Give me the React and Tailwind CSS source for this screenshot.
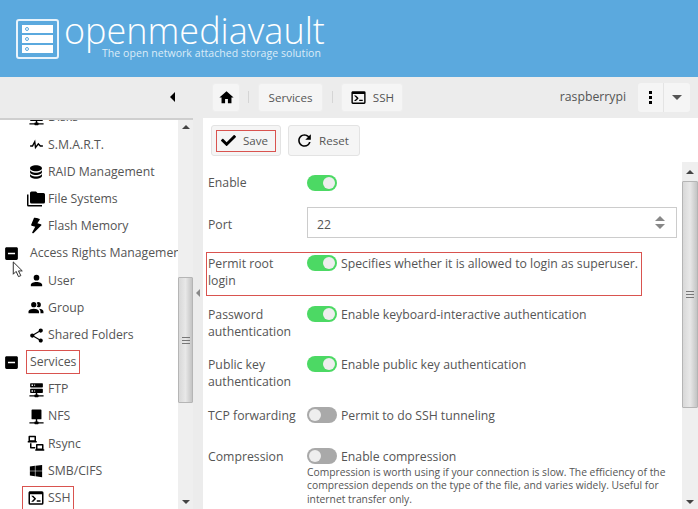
import React from 'react';
import { FaBolt, FaCheck, FaWindows } from 'react-icons/fa';
import { MdRefresh } from 'react-icons/md';

const mdi = {
  home: 'M10,20V14H14V20H19V12H22L12,3L2,12H5V20H10Z',
  console: 'M20,19V7H4V19H20M20,3A2,2 0 0,1 22,5V19A2,2 0 0,1 20,21H4A2,2 0 0,1 2,19V5C2,3.89 2.9,3 4,3H20M13,17V15H18V17H13M9.58,13L5.57,9H8.4L11.7,12.3C12.09,12.69 12.09,13.33 11.7,13.72L8.42,17H5.59L9.58,13Z',
  pulse: 'M3,13H5.79L10.1,4.79L11.28,13.75L14.5,9.66L17.83,13H21V15H17L14.67,12.67L9.92,18.73L8.94,11.31L7,15H3V13Z',
  database: 'M12,3C7.58,3 4,4.79 4,7C4,9.21 7.58,11 12,11C16.42,11 20,9.21 20,7C20,4.79 16.42,3 12,3M4,9V12C4,14.21 7.58,16 12,16C16.42,16 20,14.21 20,12V9C20,11.21 16.42,13 12,13C7.58,13 4,11.21 4,9M4,14V17C4,19.21 7.58,21 12,21C16.42,21 20,19.21 20,17V14C20,16.21 16.42,18 12,18C7.58,18 4,16.21 4,14Z',
  folders: 'M22,4H14L12,2H6A2,2 0 0,0 4,4V16A2,2 0 0,0 6,18H22A2,2 0 0,0 24,16V6A2,2 0 0,0 22,4M2,6H0V20A2,2 0 0,0 2,22H20V20H2V6Z',
  user: 'M12,4A4,4 0 0,1 16,8A4,4 0 0,1 12,12A4,4 0 0,1 8,8A4,4 0 0,1 12,4M12,14C16.42,14 20,15.79 20,18V20H4V18C4,15.79 7.58,14 12,14Z',
  group: 'M16 17V19H2V17S2 13 9 13 16 17 16 17M12.5 7.5A3.5 3.5 0 1 0 9 11A3.5 3.5 0 0 0 12.5 7.5M15.94 13A5.32 5.32 0 0 1 18 17V19H22V17S22 13.37 15.94 13M15 4A3.39 3.39 0 0 0 13.07 4.59A5 5 0 0 1 13.07 10.41A3.39 3.39 0 0 0 15 11A3.5 3.5 0 0 0 15 4Z',
  share: 'M18,16.08C17.24,16.08 16.56,16.38 16.04,16.85L8.91,12.7C8.96,12.47 9,12.24 9,12C9,11.76 8.96,11.53 8.91,11.3L15.96,7.19C16.5,7.69 17.21,8 18,8A3,3 0 0,0 21,5A3,3 0 0,0 18,2A3,3 0 0,0 15,5C15,5.24 15.04,5.47 15.09,5.7L8.04,9.81C7.5,9.31 6.79,9 6,9A3,3 0 0,0 3,12A3,3 0 0,0 6,15C6.79,15 7.5,14.69 8.04,14.19L15.16,18.34C15.11,18.55 15.08,18.77 15.08,19C15.08,20.61 16.39,21.91 18,21.91C19.61,21.91 20.92,20.61 20.92,19A2.92,2.92 0 0,0 18,16.08Z',
  server: 'M13,19H14A1,1 0 0,1 15,20H22V22H15A1,1 0 0,1 14,23H10A1,1 0 0,1 9,22H2V20H9A1,1 0 0,1 10,19H11V17H4A1,1 0 0,1 3,16V12A1,1 0 0,1 4,11H20A1,1 0 0,1 21,12V16A1,1 0 0,1 20,17H13V19M4,3H20A1,1 0 0,1 21,4V8A1,1 0 0,1 20,9H4A1,1 0 0,1 3,8V4A1,1 0 0,1 4,3M9,7H10V5H9V7M9,15H10V13H9V15M5,5V7H7V5H5M5,13V15H7V13H5Z',
  nfs: 'M6,2H18A1,1 0 0,1 19,3V15A1,1 0 0,1 18,16H13V19H14A1,1 0 0,1 15,20H22V22H15A1,1 0 0,1 14,23H10A1,1 0 0,1 9,22H2V20H9A1,1 0 0,1 10,19H11V16H6A1,1 0 0,1 5,15V3A1,1 0 0,1 6,2Z',
  rsync: 'M3,1H11A1,1 0 0,1 12,2V8H13V10H1V8H2V2A1,1 0 0,1 3,1M4,3V7H10V3H4M4,11H6V16H11V18H5A1,1 0 0,1 4,17V11M13,12H21A1,1 0 0,1 22,13V19H23V21H11V19H12V13A1,1 0 0,1 13,12M14,14V18H20V14H14Z',
  minus: 'M19,3H5C3.89,3 3,3.89 3,5V19A2,2 0 0,0 5,21H19A2,2 0 0,0 21,19V5C21,3.89 20.1,3 19,3M17,13H7V11H17V13Z',
};

function Mdi({ path, className }) {
  return (
    <svg viewBox="0 0 24 24" className={className} fill="currentColor">
      <path d={path} />
    </svg>
  );
}

const treeItems = [
  { label: 'Disks', icon: <Mdi path={mdi.server} className="w-[17px] h-[17px]" /> },
  { label: 'S.M.A.R.T.', icon: <Mdi path={mdi.pulse} className="w-[17px] h-[17px]" /> },
  { label: 'RAID Management', icon: <Mdi path={mdi.database} className="w-[20px] h-[20px]" /> },
  { label: 'File Systems', icon: <Mdi path={mdi.folders} className="w-[18px] h-[18px]" /> },
  { label: 'Flash Memory', icon: <FaBolt className="w-[16px] h-[16px] rotate-[15deg]" /> },
  { label: 'Access Rights Management', group: true },
  { label: 'User', icon: <Mdi path={mdi.user} className="w-[17px] h-[17px]" /> },
  { label: 'Group', icon: <Mdi path={mdi.group} className="w-[18px] h-[18px]" /> },
  { label: 'Shared Folders', icon: <Mdi path={mdi.share} className="w-[17px] h-[17px]" /> },
  { label: 'Services', group: true, marked: true },
  { label: 'FTP', icon: <Mdi path={mdi.server} className="w-[17px] h-[17px]" /> },
  { label: 'NFS', icon: <Mdi path={mdi.nfs} className="w-[17px] h-[17px]" /> },
  { label: 'Rsync', icon: <Mdi path={mdi.rsync} className="w-[18px] h-[18px]" /> },
  { label: 'SMB/CIFS', icon: <FaWindows className="w-[14px] h-[14px]" /> },
  { label: 'SSH', icon: <Mdi path={mdi.console} className="w-[18px] h-[18px]" />, marked: true },
];

function TreeRow({ item }) {
  if (item.group) {
    return (
      <div className="h-[27.2px] flex items-center whitespace-nowrap">
        <Mdi path={mdi.minus} className="w-[17px] h-[17px] ml-[3px] text-black shrink-0" />
        <span className={item.marked ? 'ml-[6px] px-[3px] py-[2px] border border-[#d9534f]' : 'ml-[10px]'}>{item.label}</span>
      </div>
    );
  }
  if (item.marked) {
    return (
      <div className="h-[27.2px] flex items-center whitespace-nowrap">
        <div className="ml-[22px] h-[25px] pl-[4px] pr-[3px] flex items-center border border-[#d9534f]">
          <span className="w-[18px] flex justify-center text-black">{item.icon}</span>
          <span className="ml-[3px]">{item.label}</span>
        </div>
      </div>
    );
  }
  return (
    <div className="h-[27.2px] flex items-center whitespace-nowrap">
      <span className="ml-[27px] w-[18px] flex justify-center text-black">{item.icon}</span>
      <span className="ml-[3px]">{item.label}</span>
    </div>
  );
}

function Switch({ on }) {
  return (
    <div className={`w-[30px] h-[16px] rounded-full p-[2px] flex shrink-0 ${on ? 'bg-[#4cd964] justify-end' : 'bg-[#a9a9a9] justify-start'}`}>
      <div className="w-[12px] h-[12px] rounded-full bg-[#eeeeee]" />
    </div>
  );
}

function ToggleRow({ label, on, text, className }) {
  return (
    <div className={`flex leading-[16.5px] ${className}`}>
      <div className="w-[99px] shrink-0 pt-[1px]">{label}</div>
      <Switch on={on} />
      <div className="ml-[4px] pt-[1px]">{text}</div>
    </div>
  );
}

function Grip() {
  return (
    <div className="flex flex-col gap-[2px]">
      <div className="w-[8px] h-px bg-[#777]" />
      <div className="w-[8px] h-px bg-[#777]" />
      <div className="w-[8px] h-px bg-[#777]" />
    </div>
  );
}

function Scrollbar({ width, before, thumb, after, upHeight }) {
  return (
    <div className={`${width} shrink-0 flex flex-col items-stretch bg-[#efefef]`}>
      <div className={`${upHeight} shrink-0 flex items-center justify-center`}>
        <div className="w-0 h-0 border-x-[4px] border-x-transparent border-b-[4px] border-b-[#444]" />
      </div>
      <div className={before} />
      <div className={`${thumb} shrink-0 flex items-center justify-center rounded-[1px] border border-[#b5b5b5] bg-gradient-to-r from-[#d8d8d8] via-[#e8e8e8] to-[#c4c4c4]`}>
        <Grip />
      </div>
      <div className={after} />
      <div className="h-[14px] shrink-0 flex items-center justify-center">
        <div className="w-0 h-0 border-x-[4px] border-x-transparent border-t-[4px] border-t-[#444]" />
      </div>
    </div>
  );
}

function ToolButton({ children, className }) {
  return (
    <div className={`h-[29px] rounded-[3px] bg-[#f5f5f5] border border-[#eeeeee] flex items-center justify-center text-[11.6px] ${className}`}>
      {children}
    </div>
  );
}

export default function App() {
  return (
    <div className="relative w-[698px] h-[509px] overflow-hidden flex flex-col bg-[#ececec] text-[#555] text-[12.25px] font-['Open_Sans',sans-serif]">
      <header className="h-[77px] shrink-0 bg-[#5ba9de] flex items-start pl-[16px] pt-[19px] text-white">
        <div className="w-[43px] h-[40px] rounded-[3px] border-[2px] border-[#e8f3fb] px-[4px] py-[4px] flex flex-col gap-[2px]">
          {[0, 1, 2].map((i) => (
            <div key={i} className="h-[8px] bg-white flex items-center pl-[3px]">
              <div className="w-[4px] h-[4px] rounded-full border border-[#5ba9de]" />
            </div>
          ))}
        </div>
        <div className="relative ml-[5px] -mt-[4px]">
          <div className="text-[36px] font-light leading-[32px] whitespace-nowrap">openmediavault</div>
          <div className="absolute left-[38px] top-[31px] text-[10.5px] leading-[14px] tracking-[0.06px] whitespace-nowrap text-[#dcecf8]">The open network attached storage solution</div>
        </div>
      </header>

      <div className="h-[41px] shrink-0 flex items-center pb-[1px]">
        <div className="w-[212px] shrink-0 flex">
          <div className="ml-[170px] w-0 h-0 border-y-[5px] border-y-transparent border-r-[5px] border-r-black" />
        </div>
        <ToolButton className="w-[28px] text-black"><Mdi path={mdi.home} className="w-[17px] h-[17px]" /></ToolButton>
        <div className="w-px h-[12px] bg-[#d5d5d5] ml-[8px] mr-[9px]" />
        <ToolButton className="w-[65px] pt-[2px]">Services</ToolButton>
        <div className="w-px h-[12px] bg-[#d5d5d5] ml-[9px] mr-[8px]" />
        <ToolButton className="w-[62px] gap-[6px]">
          <Mdi path={mdi.console} className="w-[17px] h-[17px] text-black" />
          <span className="pt-[2px]">SSH</span>
        </ToolButton>
        <div className="ml-auto">raspberrypi</div>
        <div className="ml-[12px] mr-[8px] h-[29px] w-[52px] rounded-[3px] bg-[#f5f5f5] flex">
          <div className="w-[26px] border-r border-[#e4e4e4] flex flex-col items-center justify-center gap-[2px]">
            <div className="w-[3px] h-[3px] bg-black" />
            <div className="w-[3px] h-[3px] bg-black" />
            <div className="w-[3px] h-[3px] bg-black" />
          </div>
          <div className="flex-1 flex items-center justify-center">
            <div className="w-0 h-0 border-x-[5px] border-x-transparent border-t-[5px] border-t-[#555]" />
          </div>
        </div>
      </div>

      <div className="flex-1 flex min-h-0">
        <div className="w-[193px] shrink-0 flex bg-white border-t-2 border-[#cfcfcf]">
          <div className="flex-1 min-w-0 overflow-hidden">
            <div className="-mt-[16px]">
              {treeItems.map((item) => (
                <TreeRow key={item.label} item={item} />
              ))}
            </div>
          </div>
          <Scrollbar width="w-[15px]" upHeight="h-[14px]" before="h-[143px]" thumb="h-[126px]" after="flex-1" />
        </div>

        <div className="w-[10px] shrink-0 flex items-center justify-center pb-[42px]">
          <div className="w-0 h-0 border-y-[4px] border-y-transparent border-r-[4px] border-r-[#888]" />
        </div>

        <div className="flex-1 min-w-0 flex flex-col bg-white">
          <div className="h-[44px] shrink-0 flex items-start pl-[8px] pt-[7px] gap-[7px] text-[11.6px]">
            <div className="w-[70px] h-[31px] rounded-[3px] bg-[#f5f5f5] border border-[#e3e3e3] flex items-center justify-center">
              <div className="w-[60px] h-[22px] border border-[#d9534f] flex items-center pl-[4px] gap-[7px]">
                <FaCheck className="w-[15px] h-[15px] text-black" />
                <span className="pt-[1px]">Save</span>
              </div>
            </div>
            <div className="w-[72px] h-[31px] rounded-[3px] bg-[#f5f5f5] border border-[#e3e3e3] flex items-center pl-[6px] gap-[5px]">
              <MdRefresh className="w-[19px] h-[19px] text-black" />
              <span className="pt-[1px]">Reset</span>
            </div>
          </div>

          <div className="flex-1 min-h-0 flex">
            <div className="flex-1 min-w-0 pl-[5px] overflow-hidden">
              <div className="flex items-center h-[16px] mt-[13px]">
                <div className="w-[99px] shrink-0">Enable</div>
                <Switch on />
              </div>
              <div className="flex items-center mt-[16px]">
                <div className="w-[99px] shrink-0 pt-[5px]">Port</div>
                <div className="w-[370px] h-[31px] border border-[#cccccc] flex items-center justify-between pl-[9px] pr-[11px]">
                  <span className="pt-[5px]">22</span>
                  <div className="flex flex-col gap-[3px]">
                    <div className="w-0 h-0 border-x-[5px] border-x-transparent border-b-[5px] border-b-[#888]" />
                    <div className="w-0 h-0 border-x-[5px] border-x-transparent border-t-[5px] border-t-[#888]" />
                  </div>
                </div>
              </div>
              <div className="-ml-[2px] mt-[14px] w-[436px] h-[44px] border border-[#d9534f] pl-[1px] pt-[2px]">
                <ToggleRow
                  label={<>Permit root<br />login</>}
                  on
                  text="Specifies whether it is allowed to login as superuser."
                />
              </div>
              <ToggleRow className="mt-[10px]" label={<>Password<br />authentication</>} on text="Enable keyboard-interactive authentication" />
              <ToggleRow className="mt-[16px]" label={<>Public key<br />authentication</>} on text="Enable public key authentication" />
              <ToggleRow className="mt-[17px]" label="TCP forwarding" on={false} text="Permit to do SSH tunneling" />
              <ToggleRow className="mt-[23px]" label="Compression" on={false} text="Enable compression" />
              <div className="ml-[99px] w-[368px] text-[10.3px] leading-[13.3px] mt-[1px]">
                Compression is worth using if your connection is slow. The efficiency of the compression depends on the type of the file, and varies widely. Useful for internet transfer only.
              </div>
            </div>
            <Scrollbar width="w-[16px]" upHeight="h-[19px]" before="h-0" thumb="h-[227px]" after="flex-1" />
          </div>
        </div>
      </div>

      <svg viewBox="0 0 12 18" className="absolute left-[12px] top-[261px] w-[12px] h-[17px]">
        <path d="M1,1V14L4,11L6.5,16.5L9,15.5L6.5,10.5H10.5Z" fill="#fff" stroke="#222" strokeWidth="1" />
      </svg>
    </div>
  );
}
